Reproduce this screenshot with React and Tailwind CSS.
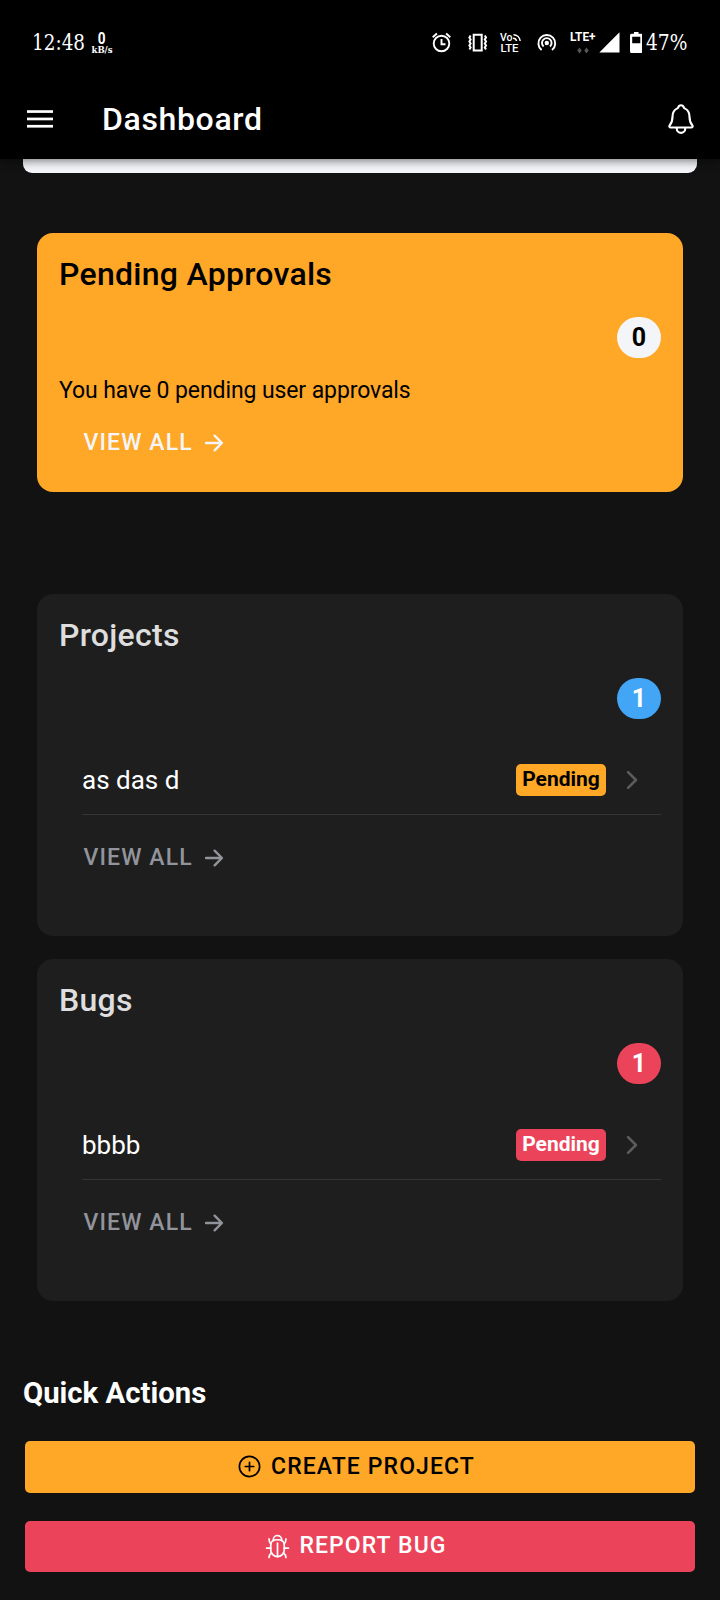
import React from "react";
import {
  IoAddCircleOutline,
  IoArrowForward,
  IoBugOutline,
  IoChevronForward,
  IoNotificationsOutline,
} from "react-icons/io5";

function StatusIcons() {
  return (
    <svg width="212" height="30" viewBox="430 26 212 30" fill="none" stroke="#fff" strokeWidth="1.9">
      {/* alarm clock */}
      <circle cx="441.5" cy="42.5" r="7.8" />
      <path d="M441.5 38v5.200h4M432.700 36.300l4.200-3.800M450.300 36.300l-4.200-3.800" />
      {/* vibrating phone */}
      <path d="M473.700 33.800h8v15.800h-8z" strokeWidth="2" />
      <path d="M470.600 34.500l-1.200 2 1.200 2-1.200 2 1.200 2-1.200 2 1.200 2-1.200 2M484.800 34.500l1.200 2-1.200 2 1.200 2-1.200 2 1.200 2-1.200 2 1.200 2" strokeWidth="2" />
      {/* VoLTE waves */}
      <path d="M513.500 33.800a7 7 0 0 1 6.700 6.200M513 37.200a3.600 3.600 0 0 1 3.600 2.800" strokeWidth="1.5" />
      <text x="500" y="39.5" fontSize="10" fontWeight="500" fill="#fff" stroke="none" fontFamily="Roboto" textLength="12.5" lengthAdjust="spacingAndGlyphs">Vo</text>
      <text x="500.5" y="50.500" fontSize="11" fontWeight="500" fill="#fff" stroke="none" fontFamily="Roboto" textLength="18" lengthAdjust="spacingAndGlyphs">LTE</text>
      {/* hotspot */}
      <circle cx="546.8" cy="42" r="2.200" fill="#fff" stroke="none" />
      <path d="M541.600 49a8.400 8.400 0 1 1 10.400 0M543.600 45.500a4.800 4.800 0 1 1 6.400 0" />
      {/* mobile data */}
      <text x="570" y="39.500" fontSize="12.500" fontWeight="700" fill="#fff" stroke="none" fontFamily="Roboto" textLength="25.500" lengthAdjust="spacingAndGlyphs">LTE+</text>
      <path d="M579.500 46.500l2.200 3-2.200 3-2.200-3zM586.500 46.500l2.200 3-2.200 3-2.200-3z" fill="#555" stroke="none" />
      <path d="M619.500 31.200V51.400h-20.200z" fill="#fff" stroke="none" />
      {/* battery */}
      <path d="M631.500 32.800h2.500V31h4.500v1.800h2.500q1.500 0 1.500 1.500v16.200q0 1.500-1.500 1.500h-9.500q-1.500 0-1.500-1.500V34.300q0-1.500 1.500-1.500zm.7 3v6.400h8.100v-6.400z" fill="#fff" fillRule="evenodd" stroke="none" />
    </svg>
  );
}

function MenuIcon() {
  return (
    <svg width="26" height="20" viewBox="0 0 26 20" fill="#fff">
      <rect y="1.200" width="26" height="2.700" />
      <rect y="8.600" width="26" height="2.700" />
      <rect y="15.900" width="26" height="2.700" />
    </svg>
  );
}

function ViewAll({ color }) {
  return (
    <div className={`ml-[24.5px] flex h-8 items-center text-[23px] font-medium tracking-[1.1px] ${color}`}>
      <span>VIEW ALL</span>
      <IoArrowForward className="ml-[8.5px] size-[26px]" />
    </div>
  );
}

function Count({ children, color }) {
  return (
    <div className={`flex h-[41px] w-11 items-center justify-center self-end rounded-[50%/22px] text-[25px] font-bold ${color}`}>
      {children}
    </div>
  );
}

function ListCard({ title, count, countColor, item, tagColor }) {
  return (
    <section className="flex h-[342px] flex-col rounded-2xl bg-[#1e1e1e] px-[22px] pt-[21px]">
      <h2 className="h-10 text-[32px] leading-10 font-medium tracking-[0.27px] text-[#dedede]">{title}</h2>
      <div className="mt-[23px] flex flex-col">
        <Count color={countColor}>{count}</Count>
      </div>
      <div className="mt-[26px] ml-[23px] flex h-[70px] items-center border-b border-[#353535] pt-px pr-[15px]">
        <span className="flex-1 text-[26px] text-white">{item}</span>
        <span className={`flex h-8 w-[90px] items-center justify-center rounded-[5px] pb-px text-[21px] font-bold ${tagColor}`}>
          Pending
        </span>
        <IoChevronForward className="ml-3 size-[28px] text-[#5c5c5c]" />
      </div>
      <div className="mt-[27px]">
        <ViewAll color="text-[#92949c]" />
      </div>
    </section>
  );
}

export default function App() {
  return (
    <div className="flex h-[1600px] w-[720px] flex-col overflow-hidden bg-[#121212] font-['Roboto',sans-serif]">
      <header className="relative z-10 h-[158.5px] shrink-0 bg-black text-white shadow-[0_2px_9px_rgba(0,0,0,0.5)]">
        <div className="flex h-20 items-center pt-[4px] pl-8 font-['DejaVu_Serif_Condensed','DejaVu_Serif',serif]">
          <div className="w-[60px] text-[23px] whitespace-nowrap">
            <div className="origin-left scale-x-[0.89]">12:48</div>
          </div>
          <div className="flex w-5 flex-col items-center leading-none">
            <span className="scale-x-[0.85] font-['Roboto'] text-[16px] leading-[16px] font-bold">0</span>
            <span className="-mt-px text-[9.5px] leading-[8px] font-bold">kB/s</span>
          </div>
          <div className="ml-[318px]">
            <StatusIcons />
          </div>
          <div className="ml-1 w-11 text-[23px] whitespace-nowrap">
            <div className="origin-left scale-x-[0.9]">47%</div>
          </div>
        </div>
        <div className="flex h-[78px] items-center pr-[22.5px] pl-[26.5px]">
          <MenuIcon />
          <h1 className="ml-[49.5px] flex-1 text-[32px] leading-10 font-medium tracking-[0.65px]">Dashboard</h1>
          <IoNotificationsOutline className="size-[34px]" />
        </div>
      </header>

      <main className="flex flex-col">
        <div className="mx-[23px] h-[14.5px] rounded-b-[9px] bg-[#f4f5f8]" />

        <div className="mx-[37px] mt-[60px] flex flex-col">
          <section className="flex h-[259px] flex-col rounded-2xl bg-[#ffa726] px-[22px] pt-[21px] text-black">
            <h2 className="h-10 text-[32px] leading-10 font-medium tracking-[0.27px]">Pending Approvals</h2>
            <div className="mt-[23px] flex flex-col">
              <Count color="bg-[#f4f5f8] text-black">0</Count>
            </div>
            <p className="mt-[17px] text-[23px] leading-8 tracking-[-0.1px]">You have 0 pending user approvals</p>
            <div className="mt-5">
              <ViewAll color="text-[#f4f5f8]" />
            </div>
          </section>

          <div className="mt-[102px] flex flex-col gap-[23px]">
            <ListCard title="Projects" count="1" countColor="bg-[#42a5f5] text-white" item="as das d" tagColor="bg-[#ffa726] text-black" />
            <ListCard title="Bugs" count="1" countColor="bg-[#eb445a] text-white" item="bbbb" tagColor="bg-[#eb445a] text-white" />
          </div>
        </div>

        <h3 className="mt-[72px] ml-[23px] h-10 text-[29.3px] leading-10 font-bold text-white">Quick Actions</h3>
        <div className="mx-[25px] mt-7 flex flex-col gap-7 text-[23px] font-medium tracking-[1.1px]">
          <button className="flex h-[52px] items-center justify-center rounded-[5px] bg-[#ffa726] pr-[9px] text-black">
            <IoAddCircleOutline className="mr-2 mb-px size-[27px]" />
            CREATE PROJECT
          </button>
          <button className="flex h-[51px] items-center justify-center rounded-[5px] bg-[#eb445a] pr-[9px] text-white">
            <IoBugOutline className="mr-2 size-[27px]" />
            REPORT BUG
          </button>
        </div>
      </main>
    </div>
  );
}
